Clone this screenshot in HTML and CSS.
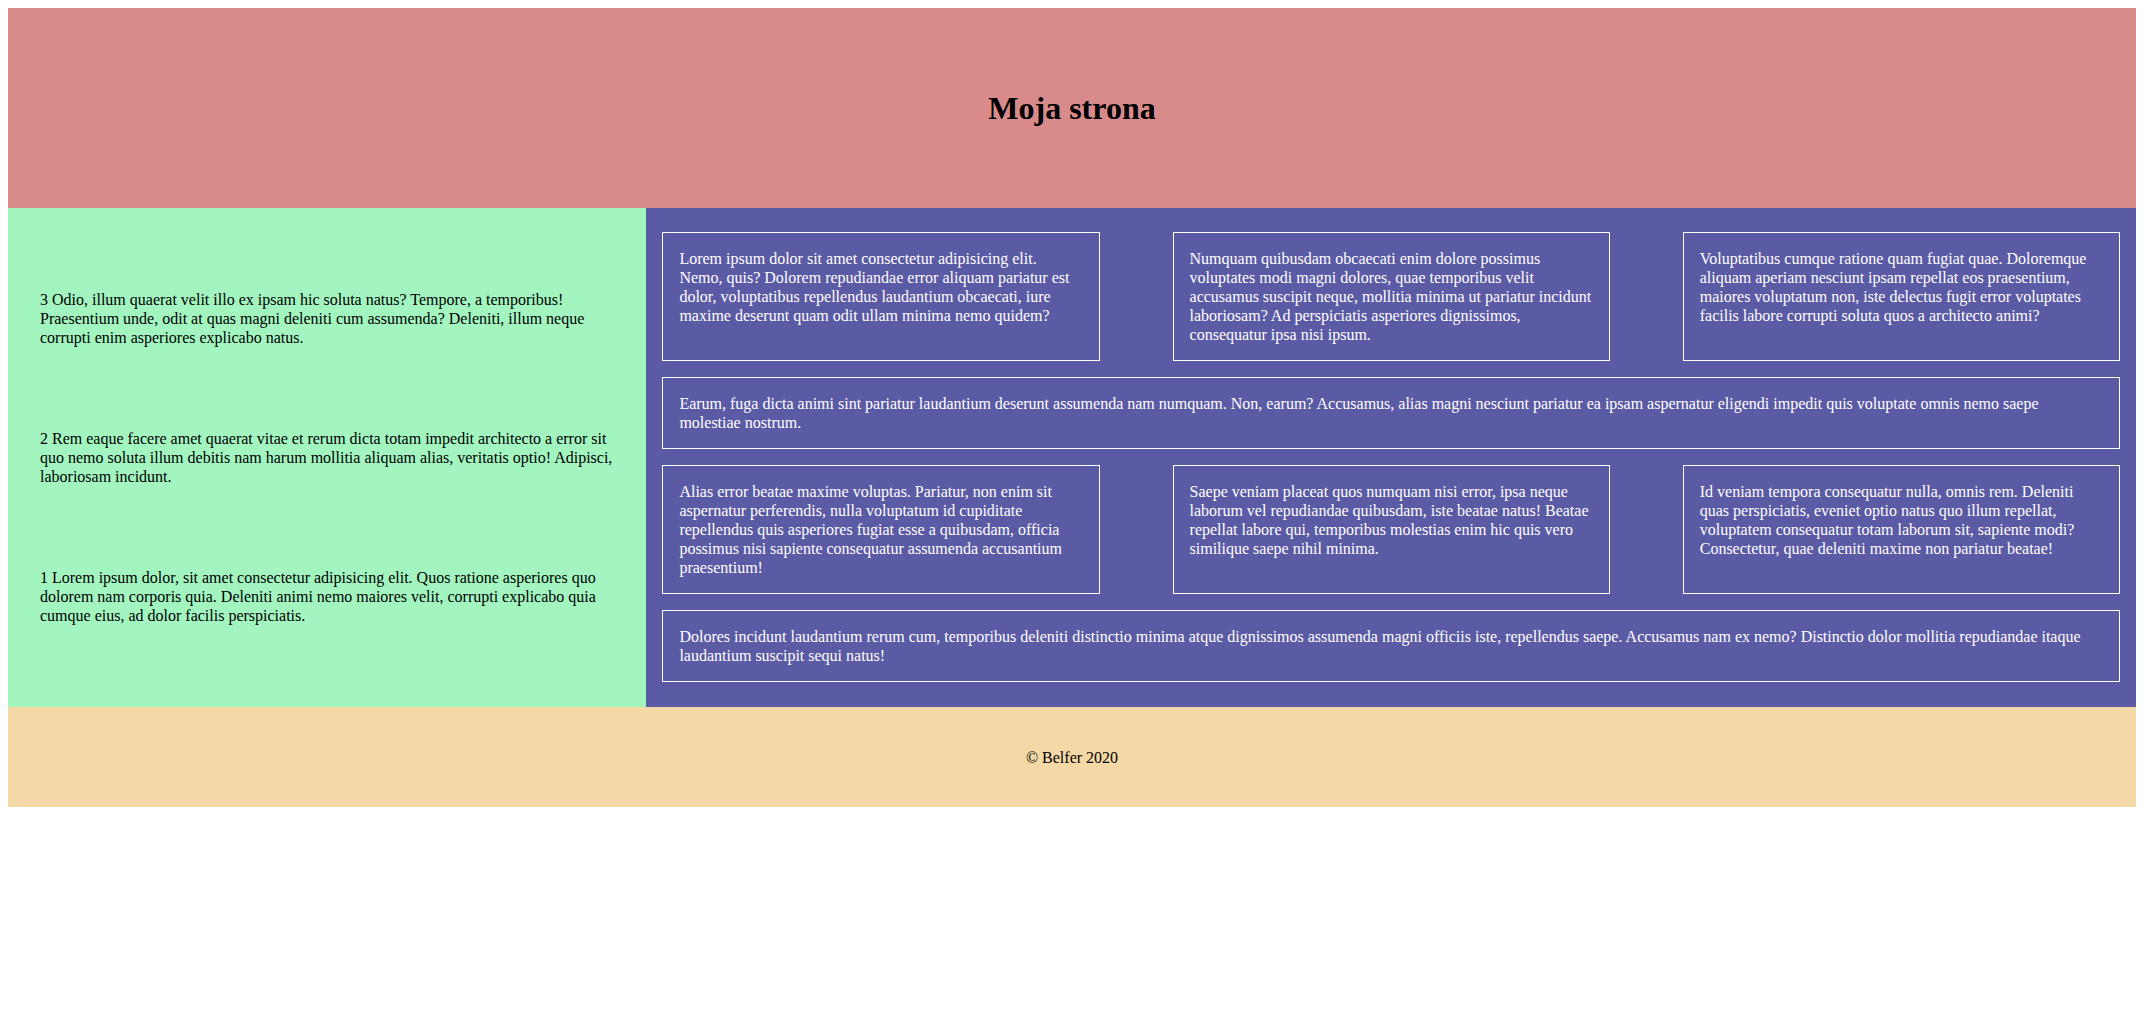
FILE: index.html
```html
<!DOCTYPE html>
<html lang="pl">
<head>
<meta charset="utf-8">
<title>Moja strona</title>
<link rel="stylesheet" href="styles.css">
</head>
<body>
<div class="page">
  <header class="top">
    <h1 class="title">Moja strona</h1>
  </header>
  <aside class="side">
    <p class="side-text">3 Odio, illum quaerat velit illo ex ipsam hic soluta natus? Tempore, a temporibus! Praesentium unde, odit at quas magni deleniti cum assumenda? Deleniti, illum neque corrupti enim asperiores explicabo natus.</p>
    <p class="side-text">2 Rem eaque facere amet quaerat vitae et rerum dicta totam impedit architecto a error sit quo nemo soluta illum debitis nam harum mollitia aliquam alias, veritatis optio! Adipisci, laboriosam incidunt.</p>
    <p class="side-text">1 Lorem ipsum dolor, sit amet consectetur adipisicing elit. Quos ratione asperiores quo dolorem nam corporis quia. Deleniti animi nemo maiores velit, corrupti explicabo quia cumque eius, ad dolor facilis perspiciatis.</p>
  </aside>
  <main class="content">
    <div class="card">Lorem ipsum dolor sit amet consectetur adipisicing elit. Nemo, quis? Dolorem repudiandae error aliquam pariatur est dolor, voluptatibus repellendus laudantium obcaecati, iure maxime deserunt quam odit ullam minima nemo quidem?</div>
    <div class="card">Numquam quibusdam obcaecati enim dolore possimus voluptates modi magni dolores, quae temporibus velit accusamus suscipit neque, mollitia minima ut pariatur incidunt laboriosam? Ad perspiciatis asperiores dignissimos, consequatur ipsa nisi ipsum.</div>
    <div class="card">Voluptatibus cumque ratione quam fugiat quae. Doloremque aliquam aperiam nesciunt ipsam repellat eos praesentium, maiores voluptatum non, iste delectus fugit error voluptates facilis labore corrupti soluta quos a architecto animi?</div>
    <div class="card card-wide">Earum, fuga dicta animi sint pariatur laudantium deserunt assumenda nam numquam. Non, earum? Accusamus, alias magni nesciunt pariatur ea ipsam aspernatur eligendi impedit quis voluptate omnis nemo saepe molestiae nostrum.</div>
    <div class="card">Alias error beatae maxime voluptas. Pariatur, non enim sit aspernatur perferendis, nulla voluptatum id cupiditate repellendus quis asperiores fugiat esse a quibusdam, officia possimus nisi sapiente consequatur assumenda accusantium praesentium!</div>
    <div class="card">Saepe veniam placeat quos numquam nisi error, ipsa neque laborum vel repudiandae quibusdam, iste beatae natus! Beatae repellat labore qui, temporibus molestias enim hic quis vero similique saepe nihil minima.</div>
    <div class="card">Id veniam tempora consequatur nulla, omnis rem. Deleniti quas perspiciatis, eveniet optio natus quo illum repellat, voluptatem consequatur totam laborum sit, sapiente modi? Consectetur, quae deleniti maxime non pariatur beatae!</div>
    <div class="card card-wide">Dolores incidunt laudantium rerum cum, temporibus deleniti distinctio minima atque dignissimos assumenda magni officiis iste, repellendus saepe. Accusamus nam ex nemo? Distinctio dolor mollitia repudiandae itaque laudantium suscipit sequi natus!</div>
  </main>
  <footer class="bottom">© Belfer 2020</footer>
</div>
</body>
</html>
```

FILE: styles.css
```css
* {
  box-sizing: border-box;
}

body {
  margin: 8px;
  font-family: "Liberation Serif", "Times New Roman", serif;
  font-size: 16px;
  line-height: 19px;
  color: #000;
  background: #fff;
}

.page {
  display: grid;
  grid-template-columns: 30% 70%;
  grid-template-rows: 200px auto 100px;
}

.top {
  grid-column: 1 / 3;
  background: #d98b8b;
  display: flex;
  align-items: center;
  justify-content: center;
}

.title {
  margin: 0;
  font-size: 32px;
  line-height: 37px;
  font-weight: bold;
}

.side {
  background: #a3f5c0;
  padding: 0 32px;
  display: flex;
  flex-direction: column;
  justify-content: space-evenly;
}

.side-text {
  margin: 0;
}

.content {
  background: #5b5aa5;
  color: #fff;
  padding: 16px 16px 17px;
  display: flex;
  flex-wrap: wrap;
  justify-content: space-between;
  align-content: flex-start;
}

.card {
  width: 30%;
  margin: 8px 0;
  padding: 16px;
  border: 1px solid #fff;
}

.card-wide {
  width: 100%;
}

.bottom {
  grid-column: 1 / 3;
  background: #f4d8a5;
  display: flex;
  align-items: center;
  justify-content: center;
}
```
